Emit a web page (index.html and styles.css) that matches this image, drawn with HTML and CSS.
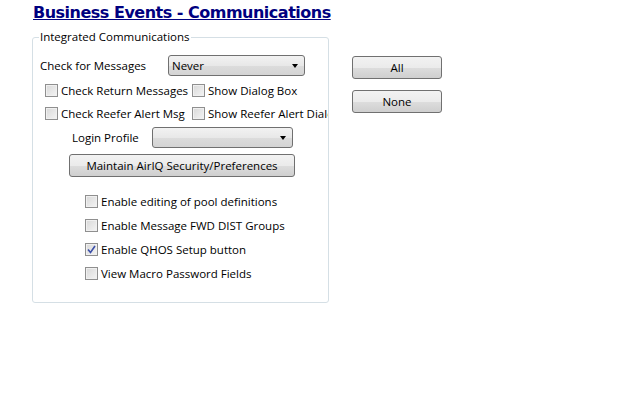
FILE: index.html
```html
<!doctype html>
<html lang="en">
    <head>
        <meta charset="UTF-8" />
        <title>Business Events - Communications</title>
        <link rel="stylesheet" href="styles.css">
    </head>
    <body>
        <h1 class="title">Business Events - Communications</h1>

        <div class="page">
            <fieldset class="group">
                <legend>Integrated Communications</legend>

                <div class="row">
                    <span class="label label-wide">Check for Messages</span>
                    <div class="select select-msg">
                        <span>Never</span>
                        <span class="arrow"></span>
                    </div>
                </div>

                <div class="check-row">
                    <label class="check check-left"><span class="box"></span>Check Return Messages</label>
                    <label class="check"><span class="box"></span>Show Dialog Box</label>
                </div>
                <div class="check-row">
                    <label class="check check-left"><span class="box"></span>Check Reefer Alert Msg</label>
                    <label class="check"><span class="box"></span>Show Reefer Alert Dialog</label>
                </div>

                <div class="row row-login">
                    <span class="label label-login">Login Profile</span>
                    <div class="select select-login">
                        <span></span>
                        <span class="arrow"></span>
                    </div>
                </div>

                <div class="row row-button">
                    <button class="btn btn-wide">Maintain AirIQ Security/Preferences</button>
                </div>

                <div class="options">
                    <label class="check"><span class="box"></span>Enable editing of pool definitions</label>
                    <label class="check"><span class="box"></span>Enable Message FWD DIST Groups</label>
                    <label class="check"><span class="box checked">
                        <svg width="9" height="9" viewBox="0 0 9 9"><path d="M1 4.5 L3.5 7.5 L8 1" fill="none" stroke="#3b4fa8" stroke-width="1.6"/></svg>
                    </span>Enable QHOS Setup button</label>
                    <label class="check"><span class="box"></span>View Macro Password Fields</label>
                </div>
            </fieldset>

            <div class="side">
                <button class="btn btn-side">All</button>
                <button class="btn btn-side">None</button>
            </div>
        </div>
    </body>
</html>
```

FILE: styles.css
```css
body {
    margin: 0;
    padding: 4px 0 0 33px;
    background-color: #ffffff;
    color: #000000;
    font-family: "Open Sans", "DejaVu Sans", sans-serif;
    font-size: 11.5px;
}

.title {
    margin: 0;
    font-family: "DejaVu Sans", Verdana, sans-serif;
    font-size: 16px;
    font-weight: bold;
    color: #000080;
    text-decoration: underline;
    line-height: 18px;
    letter-spacing: -0.5px;
}

.page {
    display: flex;
    align-items: flex-start;
    margin-top: 8px;
    margin-left: -1px;
}

.group {
    width: 288px;
    min-width: 0;
    height: 260px;
    margin: 0;
    padding: 11px 0 0 7px;
    border: 1px solid #d5dfe5;
    border-radius: 3px;
    overflow: hidden;
    box-sizing: content-box;
}

.group legend {
    padding: 0 1px;
    margin-left: -1px;
    line-height: 14px;
}

.row {
    display: flex;
    align-items: center;
}

.label-wide {
    width: 128px;
}

.select {
    display: flex;
    align-items: center;
    justify-content: space-between;
    height: 19px;
    padding: 0 6px 0 3px;
    border: 1px solid #707070;
    border-radius: 3px;
    background: linear-gradient(#f2f2f2, #e8e8e8 50%, #dcdcdc 51%, #d4d4d4);
    box-sizing: content-box;
}

.select-msg {
    width: 126px;
}

.select-login {
    width: 130px;
}

.arrow {
    width: 0;
    height: 0;
    border-left: 3.5px solid transparent;
    border-right: 3.5px solid transparent;
    border-top: 4px solid #000000;
}

.check-row {
    display: flex;
    white-space: nowrap;
    margin-top: 6px;
}

.check-row + .check-row {
    margin-top: 6px;
}

.check {
    display: flex;
    align-items: center;
    height: 17px;
    white-space: nowrap;
}

.check-left {
    flex: none;
    width: 147px;
    margin-left: 5px;
    overflow: hidden;
}

.box {
    display: inline-flex;
    flex: none;
    align-items: center;
    justify-content: center;
    width: 11px;
    height: 11px;
    margin-right: 3px;
    border: 1px solid #8f8f8f;
    background: linear-gradient(135deg, #d8d8d8, #f4f4f4);
    box-shadow: inset 0 0 0 1px #f0f0f0;
}

.box.checked svg {
    display: block;
}

.row-login {
    margin-top: 5px;
    margin-left: 32px;
}

.label-login {
    width: 80px;
}

.row-button {
    margin-top: 6px;
    margin-left: 29px;
}

.btn {
    height: 23px;
    padding: 0;
    border: 1px solid #707070;
    border-radius: 3px;
    background: linear-gradient(#f2f2f2, #ebebeb 50%, #dddddd 51%, #cfcfcf);
    font-family: "Open Sans", "DejaVu Sans", sans-serif;
    font-size: 11.5px;
    color: #000000;
}

.btn-wide {
    width: 226px;
}

.options {
    display: flex;
    flex-direction: column;
    gap: 7px;
    margin-top: 16px;
    margin-left: 45px;
}

.side {
    display: flex;
    flex-direction: column;
    gap: 11px;
    margin-left: 23px;
    margin-top: 26px;
}

.btn-side {
    width: 90px;
    height: 23px;
}
```
